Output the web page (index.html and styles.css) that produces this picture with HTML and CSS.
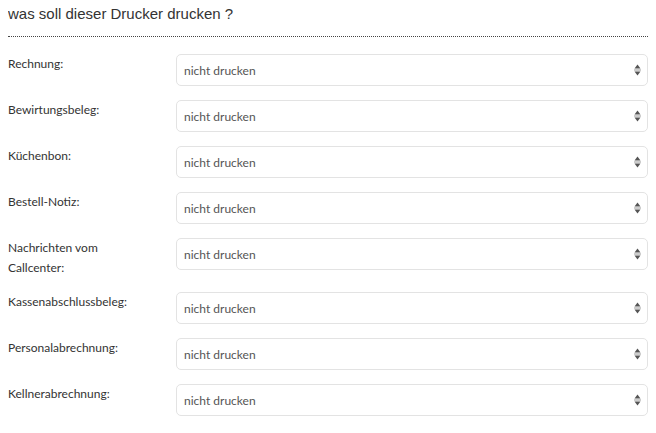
FILE: index.html
```html
<!DOCTYPE html>
<html lang="de">
<head>
  <meta charset="UTF-8">
  <meta name="viewport" content="width=device-width, initial-scale=1.0">
  <title>Drucker</title>
  <link rel="stylesheet" href="styles.css">
</head>
<body>

  <h1 class="title">was soll dieser Drucker drucken ?</h1>

  <div class="printer-form">
    <!-- one row per document type -->
    <div class="row">
      <label class="row-label">Rechnung:</label>
      <div class="select-box"><span>nicht drucken</span><svg class="arrows" width="7" height="12" viewBox="0 0 7 12"><path d="M3.5 0.5 L6.5 4.5 L0.5 4.5 Z M0.5 7.5 L6.5 7.5 L3.5 11.5 Z" fill="#555"/><rect x="0" y="5.5" width="7" height="1" fill="#999"/></svg></div>
    </div>
    <div class="row">
      <label class="row-label">Bewirtungsbeleg:</label>
      <div class="select-box"><span>nicht drucken</span><svg class="arrows" width="7" height="12" viewBox="0 0 7 12"><path d="M3.5 0.5 L6.5 4.5 L0.5 4.5 Z M0.5 7.5 L6.5 7.5 L3.5 11.5 Z" fill="#555"/><rect x="0" y="5.5" width="7" height="1" fill="#999"/></svg></div>
    </div>
    <div class="row">
      <label class="row-label">Küchenbon:</label>
      <div class="select-box"><span>nicht drucken</span><svg class="arrows" width="7" height="12" viewBox="0 0 7 12"><path d="M3.5 0.5 L6.5 4.5 L0.5 4.5 Z M0.5 7.5 L6.5 7.5 L3.5 11.5 Z" fill="#555"/><rect x="0" y="5.5" width="7" height="1" fill="#999"/></svg></div>
    </div>
    <div class="row">
      <label class="row-label">Bestell-Notiz:</label>
      <div class="select-box"><span>nicht drucken</span><svg class="arrows" width="7" height="12" viewBox="0 0 7 12"><path d="M3.5 0.5 L6.5 4.5 L0.5 4.5 Z M0.5 7.5 L6.5 7.5 L3.5 11.5 Z" fill="#555"/><rect x="0" y="5.5" width="7" height="1" fill="#999"/></svg></div>
    </div>
    <div class="row">
      <label class="row-label">Nachrichten vom Callcenter:</label>
      <div class="select-box"><span>nicht drucken</span><svg class="arrows" width="7" height="12" viewBox="0 0 7 12"><path d="M3.5 0.5 L6.5 4.5 L0.5 4.5 Z M0.5 7.5 L6.5 7.5 L3.5 11.5 Z" fill="#555"/><rect x="0" y="5.5" width="7" height="1" fill="#999"/></svg></div>
    </div>
    <div class="row">
      <label class="row-label">Kassenabschlussbeleg:</label>
      <div class="select-box"><span>nicht drucken</span><svg class="arrows" width="7" height="12" viewBox="0 0 7 12"><path d="M3.5 0.5 L6.5 4.5 L0.5 4.5 Z M0.5 7.5 L6.5 7.5 L3.5 11.5 Z" fill="#555"/><rect x="0" y="5.5" width="7" height="1" fill="#999"/></svg></div>
    </div>
    <div class="row">
      <label class="row-label">Personalabrechnung:</label>
      <div class="select-box"><span>nicht drucken</span><svg class="arrows" width="7" height="12" viewBox="0 0 7 12"><path d="M3.5 0.5 L6.5 4.5 L0.5 4.5 Z M0.5 7.5 L6.5 7.5 L3.5 11.5 Z" fill="#555"/><rect x="0" y="5.5" width="7" height="1" fill="#999"/></svg></div>
    </div>
    <div class="row">
      <label class="row-label">Kellnerabrechnung:</label>
      <div class="select-box"><span>nicht drucken</span><svg class="arrows" width="7" height="12" viewBox="0 0 7 12"><path d="M3.5 0.5 L6.5 4.5 L0.5 4.5 Z M0.5 7.5 L6.5 7.5 L3.5 11.5 Z" fill="#555"/><rect x="0" y="5.5" width="7" height="1" fill="#999"/></svg></div>
    </div>
  </div>

</body>
</html>
```

FILE: styles.css
```css
body {
  font-family: Lato, "Liberation Sans", sans-serif;
  background: #fff;
  color: #333;
  margin: 0 8px;
}

.title {
  font-family: "Liberation Sans", Arial, sans-serif;
  font-weight: normal;
  font-size: 15px;
  line-height: 17px;
  color: #333;
  margin: 5px 0 0;
  padding-bottom: 14px;
  border-bottom: 1px dotted #444;
}

.printer-form {
  margin-top: 17px;
}

.row {
  display: grid;
  grid-template-columns: 168px 1fr;
  align-items: start;
  margin-bottom: 14px;
}

.row-label {
  font-size: 12px;
  line-height: 20px;
  padding-right: 38px;
  color: #333;
}

.select-box {
  height: 32px;
  box-sizing: border-box;
  border: 1px solid #e3e3e3;
  border-radius: 5px;
  display: flex;
  align-items: center;
  justify-content: space-between;
  padding: 0 6px 0 7px;
  font-size: 12px;
  color: #555;
}

.arrows {
  display: block;
}
```
